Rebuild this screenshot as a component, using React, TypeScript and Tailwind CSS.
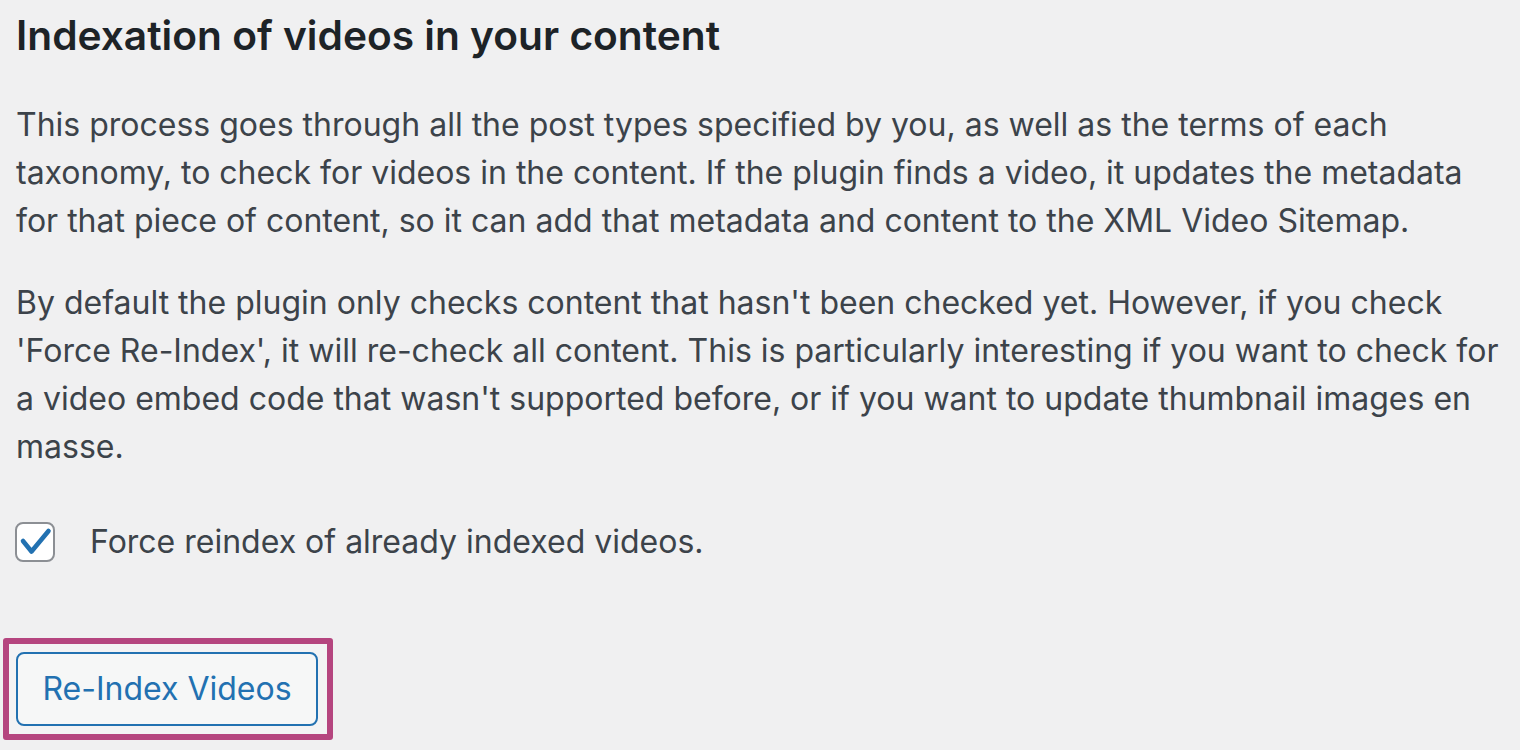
const para1 = [
  "This process goes through all the post types specified by you, as well as the terms of each",
  "taxonomy, to check for videos in the content. If the plugin finds a video, it updates the metadata",
  "for that piece of content, so it can add that metadata and content to the XML Video Sitemap.",
];

const para2 = [
  "By default the plugin only checks content that hasn't been checked yet. However, if you check",
  "'Force Re-Index', it will re-check all content. This is particularly interesting if you want to check for",
  "a video embed code that wasn't supported before, or if you want to update thumbnail images en",
  "masse.",
];

function Lines({ lines }: { lines: string[] }) {
  return (
    <p className="text-[32px] leading-[48px] text-[#3c434a]">
      {lines.map((l) => (
        <span key={l} className="block whitespace-nowrap">
          {l}
        </span>
      ))}
    </p>
  );
}

export default function App() {
  return (
    <div
      className="h-[750px] w-[1520px] overflow-hidden bg-[#f0f0f1] pl-4"
      style={{ fontFamily: "Inter, 'Noto Sans', sans-serif" }}
    >
      <h2 className="pt-[12px] text-[40.7px] font-semibold leading-[48px] text-[#1d2327]">
        Indexation of videos in your content
      </h2>
      <div className="mt-[41px]">
        <Lines lines={para1} />
      </div>
      <div className="mt-[34px]">
        <Lines lines={para2} />
      </div>
      <label className="-ml-px mt-[47px] flex items-center gap-[35px]">
        <span className="flex h-10 w-10 items-center justify-center rounded-lg border-2 border-[#8c8f94] bg-white">
          <svg viewBox="0 0 36 36" className="h-9 w-9">
            <path
              d="M6 17l8.5 10.5L31.5 7"
              fill="none"
              stroke="#2271b1"
              strokeWidth="4.6"
              strokeLinecap="round"
              strokeLinejoin="round"
            />
          </svg>
        </span>
        <span className="text-[32px] text-[#3c434a]">Force reindex of already indexed videos.</span>
      </label>
      <div className="-ml-[13px] mt-[72px] inline-block rounded-[3px] border-[6px] border-[#b5457f] bg-[#f3f3f4] py-2 pl-[7px] pr-[9px]">
        <button
          type="button"
          className="block h-[74px] w-[302px] rounded-lg border-2 border-[#2271b1] bg-[#f6f7f7] text-[32px] text-[#2271b1]"
        >
          Re-Index Videos
        </button>
      </div>
    </div>
  );
}
